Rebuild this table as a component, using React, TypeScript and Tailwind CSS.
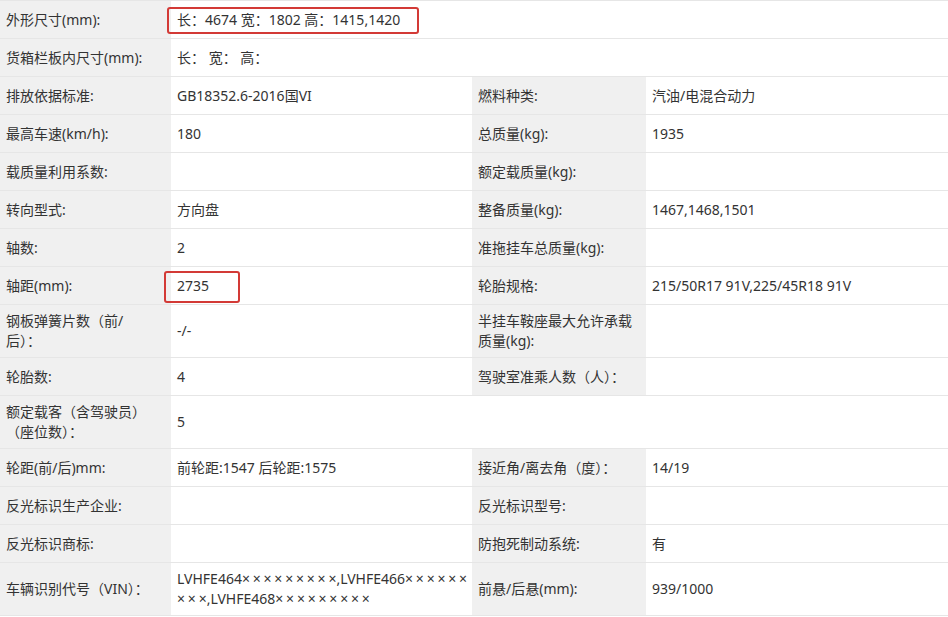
import type { ReactNode } from 'react';

// × marks are spaced out in the source page; the last one sits tight against the next char
const X = ({ n }: { n: number }) => (
  <>
    <span className="tracking-[2.8px]">{'×'.repeat(n - 1)}</span>×
  </>
);

const rows: { label: ReactNode; value?: ReactNode; label2?: ReactNode; value2?: ReactNode; span?: boolean }[] = [
  { label: '外形尺寸(mm):', value: '长：4674 宽：1802 高：1415,1420', span: true },
  { label: '货箱栏板内尺寸(mm):', value: '长：  宽：  高：', span: true },
  { label: '排放依据标准:', value: 'GB18352.6-2016国VI', label2: '燃料种类:', value2: '汽油/电混合动力' },
  { label: '最高车速(km/h):', value: '180', label2: '总质量(kg):', value2: '1935' },
  { label: '载质量利用系数:', value: '', label2: '额定载质量(kg):', value2: '' },
  { label: '转向型式:', value: '方向盘', label2: '整备质量(kg):', value2: '1467,1468,1501' },
  { label: '轴数:', value: '2', label2: '准拖挂车总质量(kg):', value2: '' },
  { label: '轴距(mm):', value: '2735', label2: '轮胎规格:', value2: '215/50R17 91V,225/45R18 91V' },
  {
    label: (
      <>
        钢板弹簧片数（前/
        <br />
        后）：
      </>
    ),
    value: '-/-',
    label2: (
      <>
        半挂车鞍座最大允许承载
        <br />
        质量(kg):
      </>
    ),
    value2: '',
  },
  { label: '轮胎数:', value: '4', label2: '驾驶室准乘人数（人）：', value2: '' },
  {
    label: (
      <>
        额定载客（含驾驶员）
        <br />
        （座位数）：
      </>
    ),
    value: '5',
    span: true,
  },
  { label: '轮距(前/后)mm:', value: '前轮距:1547 后轮距:1575', label2: '接近角/离去角（度）：', value2: '14/19' },
  { label: '反光标识生产企业:', value: '', label2: '反光标识型号:', value2: '' },
  { label: '反光标识商标:', value: '', label2: '防抱死制动系统:', value2: '有' },
  {
    label: '车辆识别代号（VIN）：',
    value: (
      <span>
        LVHFE464
        <X n={9} />
        ,LVHFE466
        <X n={6} />
        <br />
        <X n={3} />
        ,LVHFE468
        <X n={9} />
      </span>
    ),
    label2: '前悬/后悬(mm):',
    value2: '939/1000',
  },
];

const labelCls = 'flex min-h-[38px] items-center border-b border-[#e6e6e6] bg-[#f0f0f0] px-[6px] py-[6px]';
const valueCls = 'relative flex min-h-[38px] items-center border-b border-[#e6e6e6] bg-white px-[6px] py-[6px]';

export default function App() {
  return (
    <div
      className="h-[617px] w-[948px] overflow-hidden bg-white text-[14px] leading-[20px] text-[#333]"
      style={{ fontFamily: '"Microsoft YaHei", "Noto Sans", "Noto Sans CJK SC", sans-serif' }}
    >
      <div className="grid grid-cols-[171px_301px_174px_302px] border-t border-[#e6e6e6]">
        {rows.map((r, i) => (
          <div key={i} className="contents">
            <div className={labelCls}>
              <div>{r.label}</div>
            </div>
            {r.span ? (
              <div className={`${valueCls} col-span-3`}>
                {r.value}
                {i === 0 && (
                  <div className="absolute left-[-4px] top-[6px] h-[27px] w-[252px] rounded-[3px] border-2 border-[#d33a36]" />
                )}
              </div>
            ) : (
              <>
                <div className={valueCls}>
                  {r.value}
                  {r.label === '轴距(mm):' && (
                    <div className="absolute left-[-7px] top-[4px] h-[32px] w-[76px] rounded-[3px] border-2 border-[#d33a36]" />
                  )}
                </div>
                <div className={labelCls}>
                  <div>{r.label2}</div>
                </div>
                <div className={valueCls}>{r.value2}</div>
              </>
            )}
          </div>
        ))}
      </div>
    </div>
  );
}
